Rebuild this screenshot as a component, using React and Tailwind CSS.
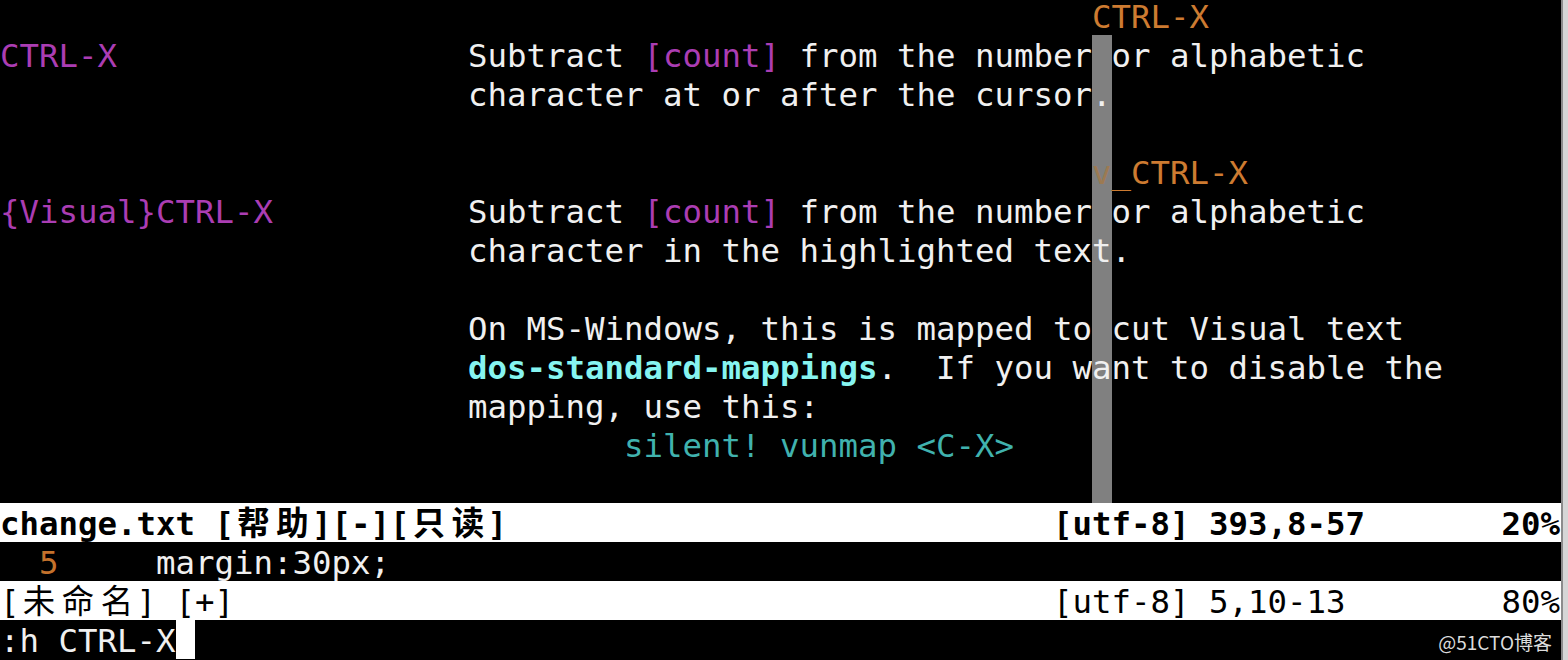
const BAR_COL = 56;

const tones = {
  fg: "text-[#f0f0f0]",
  purple: "text-[#ab3db3]",
  orange: "text-[#cd7b31]",
  hidden: "text-[#9c7a52]",
  link: "font-bold text-[#86f4f0]",
  teal: "text-[#40b2ae]",
  lnr: "text-[#c4722c]",
  status: "",
};

const sp = (n) => " ".repeat(n);

const body = [
  { segs: [[sp(56)], ["CTRL-X", "orange"]] },
  {
    bar: true,
    segs: [["CTRL-X", "purple"], [sp(18) + "Subtract "], ["[count]", "purple"], [" from the number or alphabetic"]],
  },
  { bar: true, segs: [[sp(24) + "character at or after the cursor."]] },
  { bar: true, segs: [] },
  { bar: true, segs: [[sp(56)], ["v", "hidden"], ["_CTRL-X", "orange"]] },
  {
    bar: true,
    segs: [["{Visual}CTRL-X", "purple"], [sp(10) + "Subtract "], ["[count]", "purple"], [" from the number or alphabetic"]],
  },
  { bar: true, segs: [[sp(24) + "character in the highlighted text."]] },
  { bar: true, segs: [] },
  { bar: true, segs: [[sp(24) + "On MS-Windows, this is mapped to cut Visual text"]] },
  { bar: true, segs: [[sp(24)], ["dos-standard-mappings", "link"], [".  If you want to disable the"]] },
  { bar: true, segs: [[sp(24) + "mapping, use this:"]] },
  { bar: true, segs: [[sp(32)], ["silent! vunmap <C-X>", "teal"]] },
  { bar: true, segs: [] },
];

const isWide = (ch) => ch.charCodeAt(0) > 0x2e80;

function Row({ segs, bar = false, base = "", cursorAt = -1 }) {
  const parts = [];
  let col = 0;
  let buf = null;
  const flush = () => {
    if (buf) parts.push(buf);
    buf = null;
  };
  const push = (ch, tone) => {
    if (isWide(ch)) {
      flush();
      parts.push({ kind: "wide", text: ch, tone });
      col += 2;
      return;
    }
    if ((bar && col === BAR_COL) || col === cursorAt) {
      flush();
      parts.push({ kind: col === cursorAt ? "cursor" : "bar", text: ch, tone });
      col += 1;
      return;
    }
    if (buf && buf.tone === tone) buf.text += ch;
    else {
      flush();
      buf = { kind: "run", text: ch, tone };
    }
    col += 1;
  };

  segs.forEach(([text, tone = "fg"]) => {
    for (const ch of text) push(ch, tone);
  });
  while ((bar && col <= BAR_COL) || col <= cursorAt) push(" ", "fg");
  flush();

  // line box is a bit taller than the row so glyphs sit ~2px lower, clipped at 39px
  return (
    <div className={`h-[39px] overflow-hidden whitespace-pre leading-[43px] ${base}`}>
      {parts.map((p, i) => {
        const tone = tones[p.tone] ?? "";
        if (p.kind === "wide")
          return (
            <span key={i} className={`inline-block w-[39px] text-center ${tone}`}>
              {p.text}
            </span>
          );
        if (p.kind === "bar")
          return (
            <span key={i} className={`inline-block w-[19.5px] bg-[#808080] ${tone}`}>
              {p.text}
            </span>
          );
        if (p.kind === "cursor")
          return (
            <span key={i} className="inline-block w-[19.5px] bg-white text-black">
              {p.text}
            </span>
          );
        return (
          <span key={i} className={tone}>
            {p.text}
          </span>
        );
      })}
    </div>
  );
}

function StatusRow({ left, pos, pct, bold }) {
  const width = (s) => [...s].reduce((n, ch) => n + (isWide(ch) ? 2 : 1), 0);
  const text = left + sp(54 - width(left)) + pos + sp(23 - pos.length) + pct;
  return (
    <Row
      segs={[[text, "status"]]}
      base={`bg-white text-black ${bold ? "font-bold" : ""}`}
    />
  );
}

export default function App() {
  return (
    <div className="relative flex h-[660px] w-[1568px] overflow-hidden bg-black font-['DejaVu_Sans_Mono','Noto_Sans_CJK_SC',monospace] text-[32.4px]">
      <div className="w-[1561px] overflow-hidden">
        <div className="-mt-1 flex flex-col">
          {body.map((r, i) => (
            <Row key={i} segs={r.segs} bar={r.bar} />
          ))}
          <StatusRow left="change.txt [帮助][-][只读]" pos="[utf-8] 393,8-57" pct="20%" bold />
          <Row segs={[["  "], ["5", "lnr"], [sp(5) + "margin:30px;"]]} />
          <StatusRow left="[未命名] [+]" pos="[utf-8] 5,10-13" pct="80%" />
          <Row segs={[[":h CTRL-X"]]} cursorAt={9} />
        </div>
      </div>
      <div className="w-[7px] border-l-2 border-[#8c8c8c] bg-[#d6d6d6]" />

      <span className="absolute right-[16px] bottom-[9px] font-['Noto_Sans_CJK_SC',sans-serif] text-[19px] leading-none text-[#dcdcdc]">
        @51CTO博客
      </span>
    </div>
  );
}
